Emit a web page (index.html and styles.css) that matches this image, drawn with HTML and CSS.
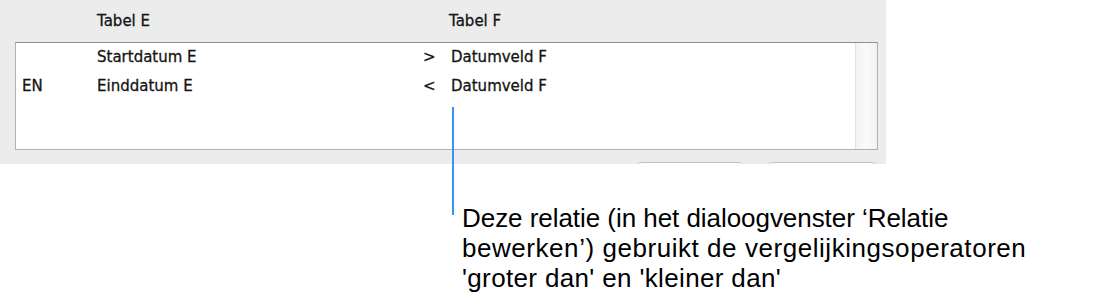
FILE: index.html
```html
<!DOCTYPE html>
<html lang="nl">
<head>
<meta charset="utf-8">
<title>Relatie bewerken</title>
<link rel="stylesheet" href="styles.css">
</head>
<body>
<div class="page">
  <div class="panel">
    <div class="grid head">
      <span></span>
      <span>Tabel E</span>
      <span></span>
      <span class="cf">Tabel F</span>
    </div>
    <div class="list">
      <div class="rows">
        <div class="grid row">
          <span class="conj"></span>
          <span>Startdatum E</span>
          <span class="op">&gt;</span>
          <span>Datumveld F</span>
        </div>
        <div class="grid row">
          <span class="conj">EN</span>
          <span>Einddatum E</span>
          <span class="op">&lt;</span>
          <span>Datumveld F</span>
        </div>
      </div>
      <div class="scroll"></div>
    </div>
    <div class="buttons">
      <div class="btn btn-a"></div>
      <div class="btn btn-b"></div>
    </div>
  </div>
  <div class="callout">
    <div class="leader"></div>
    <p class="caption"><span class="l1">Deze relatie (in het dialoogvenster ‘Relatie</span><br><span class="l2">bewerken’) gebruikt de vergelijkingsoperatoren</span><br><span class="l3">'groter dan' en 'kleiner dan'</span></p>
  </div>
</div>
</body>
</html>
```
FILE: styles.css
```css
html, body {
  margin: 0;
  padding: 0;
  background: #ffffff;
}

.page {
  position: relative;
  width: 1102px;
  height: 303px;
  overflow: hidden;
}

.panel {
  width: 886px;
  height: 164px;
  background: #ececec;
  overflow: hidden;
  font-family: "DejaVu Sans", "Liberation Sans", sans-serif;
  font-size: 15px;
  color: #141414;
  -webkit-text-stroke: 0.3px #141414;
}

.grid {
  display: grid;
  grid-template-columns: 81px 326px 28px 1fr;
  line-height: 28px;
  white-space: nowrap;
}

.head {
  box-sizing: border-box;
  height: 42px;
  padding: 7px 0 0 16px;
}

.head .cf {
  margin-left: -2px;
}

.list {
  display: flex;
  margin-left: 15px;
  width: 863px;
  height: 108px;
  box-sizing: border-box;
  background: #ffffff;
  border: 1px solid #b0b0b0;
  border-top-color: #8e8e8e;
}

.rows {
  flex: 1;
}

.row {
  height: 28.6px;
}

.conj {
  padding-left: 6px;
}

.scroll {
  width: 21px;
  border-left: 1px solid #e2e2e2;
  background: linear-gradient(to right, #f3f3f3, #fafafa 50%, #f1f1f1);
}

.buttons {
  display: flex;
  justify-content: flex-end;
  gap: 23px;
  margin: 12px 9px 0 0;
}

.btn {
  height: 22px;
  box-sizing: border-box;
  border: 1px solid #c4c4c4;
  border-radius: 5px;
  background: #fbfbfb;
}

.btn-a {
  width: 108px;
}

.btn-b {
  width: 110px;
}

.callout {
  position: absolute;
  left: 452px;
  top: 107px;
  display: flex;
  align-items: flex-start;
}

.leader {
  width: 2px;
  height: 108px;
  background: #3a93f3;
}

.caption {
  margin: 96px 0 0 8px;
  white-space: nowrap;
  font-family: "Liberation Sans", Arial, sans-serif;
  font-size: 26px;
  line-height: 30px;
  color: #000000;
}

.l1 {
  letter-spacing: -0.05px;
}

.l2 {
  letter-spacing: 0.55px;
}

.l3 {
  letter-spacing: 0.35px;
}
```
